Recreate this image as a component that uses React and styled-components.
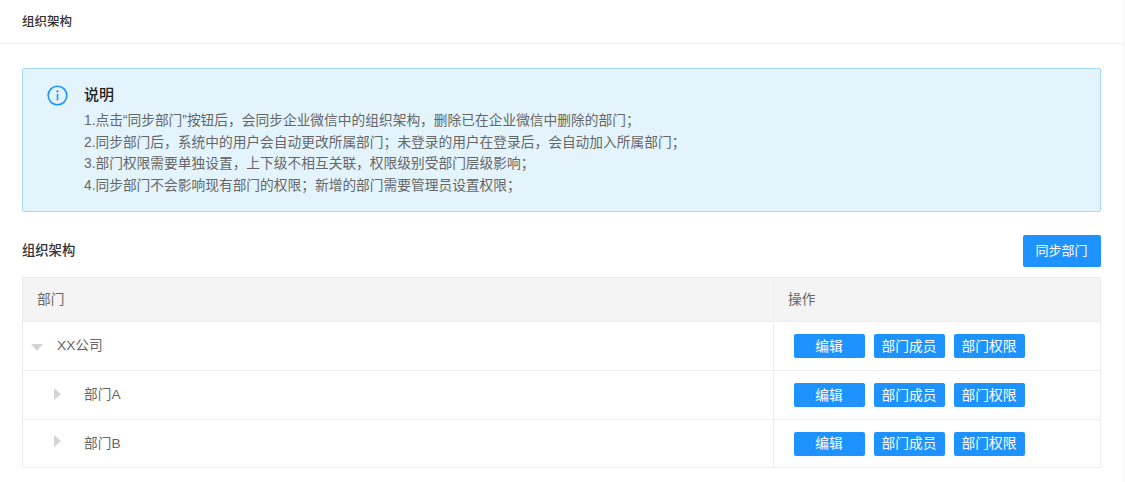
import React from 'react'
import styled, { createGlobalStyle } from 'styled-components'

const GlobalStyle = createGlobalStyle`
  html, body {
    margin: 0;
    padding: 0;
    background: #fff;
    font-family: "Liberation Sans", "Noto Sans CJK SC", sans-serif;
  }
`

const Page = styled.div`
  width: 1123px;
  height: 482px;
  border-right: 1px solid #f5f5f5;
  overflow: hidden;
`

const TopBar = styled.div`
  height: 43px;
  box-sizing: content-box;
  display: flex;
  align-items: center;
  padding: 0 22px;
  border-bottom: 1px solid #f0f0f0;
  font-size: 12.5px;
  font-weight: 500;
  color: #333;

  span {
    margin-bottom: 3px;
  }
`

const Content = styled.div`
  padding: 24px 22px 0;
`

const Notice = styled.div`
  box-sizing: border-box;
  width: 1079px;
  height: 144px;
  display: flex;
  background: #e3f4fd;
  border: 1px solid #a3daff;
  border-radius: 2px;
  padding: 14px 24px 0;
`

const NoticeIcon = styled.svg`
  width: 21px;
  height: 21px;
  margin: 2px 16px 0 0;
  flex-shrink: 0;
`

const NoticeTitle = styled.div`
  font-size: 15px;
  font-weight: 500;
  line-height: 24px;
  margin-bottom: 3px;
  color: #222;
`

const NoticeLine = styled.div`
  font-size: 13.72px;
  line-height: 21.7px;
  color: #666;
`

const SectionHead = styled.div`
  display: flex;
  align-items: center;
  justify-content: space-between;
  margin-top: 23px;
  height: 32px;
`

const SectionTitle = styled.div`
  font-size: 13.3px;
  font-weight: 500;
  margin-bottom: 3px;
  color: #333;
`

const Button = styled.button`
  box-sizing: border-box;
  border: 0;
  padding: 0 1px 3px 0;
  background: #1e92ff;
  color: #fff;
  font: inherit;
  font-size: ${p => (p.$large ? '13px' : '13.7px')};
  border-radius: 2px;
  width: ${p => (p.$large ? '78px' : '71px')};
  height: ${p => (p.$large ? '32px' : '24px')};
`

const Table = styled.div`
  box-sizing: border-box;
  width: 1079px;
  margin-top: 10px;
  border: 1px solid #ededed;
  font-size: 13.7px;
  color: #666;
`

const Row = styled.div`
  display: grid;
  grid-template-columns: 750px 1fr;
  height: ${p => p.$h}px;
  border-bottom: ${p => (p.$last ? '0' : '1px solid #ededed')};
  box-sizing: border-box;
  background: ${p => (p.$head ? '#f4f4f4' : '#fff')};
`

const NameCell = styled.div`
  display: flex;
  align-items: center;
  padding-left: ${p => p.$indent}px;
`

const CellLabel = styled.span`
  margin-bottom: 4px;
`

const ActionCell = styled.div`
  display: flex;
  align-items: center;
  gap: 9px;
  padding-left: ${p => p.$pad}px;
  border-left: 1px solid #ededed;
`

const Caret = styled.span`
  width: 0;
  height: 0;
  margin-right: ${p => p.$gap}px;
  margin-bottom: ${p => p.$lift}px;
  border-style: solid;
  ${p => p.$open
    ? 'border-width: 7px 6px 0 6px; border-color: #d4d4d4 transparent transparent transparent;'
    : 'border-width: 6px 0 6px 7px; border-color: transparent transparent transparent #d4d4d4;'}
`

const rows = [
  { name: 'XX公司', indent: 8, open: true, gap: 14, h: 49, lift: -2 },
  { name: '部门A', indent: 31, open: false, gap: 23, h: 49, lift: 2 },
  { name: '部门B', indent: 31, open: false, gap: 23, h: 47, lift: 6, last: true },
]

function App() {
  return (
    <Page>
      <GlobalStyle />
      <TopBar><span>组织架构</span></TopBar>
      <Content>
        <Notice>
          <NoticeIcon viewBox="0 0 21 21" fill="none">
            <circle cx="10.5" cy="10.5" r="9.3" stroke="#1e92ff" strokeWidth="1.6" />
            <circle cx="10.5" cy="6.4" r="1.1" fill="#1e92ff" />
            <rect x="9.7" y="9" width="1.6" height="6.4" fill="#1e92ff" />
          </NoticeIcon>
          <div>
            <NoticeTitle>说明</NoticeTitle>
            <NoticeLine>1.点击“同步部门”按钮后，会同步企业微信中的组织架构，删除已在企业微信中删除的部门；</NoticeLine>
            <NoticeLine>2.同步部门后，系统中的用户会自动更改所属部门；未登录的用户在登录后，会自动加入所属部门；</NoticeLine>
            <NoticeLine>3.部门权限需要单独设置，上下级不相互关联，权限级别受部门层级影响；</NoticeLine>
            <NoticeLine>4.同步部门不会影响现有部门的权限；新增的部门需要管理员设置权限；</NoticeLine>
          </div>
        </Notice>
        <SectionHead>
          <SectionTitle>组织架构</SectionTitle>
          <Button $large>同步部门</Button>
        </SectionHead>
        <Table>
          <Row $head $h={44}>
            <NameCell $indent={14}><CellLabel>部门</CellLabel></NameCell>
            <ActionCell $pad={14}><CellLabel>操作</CellLabel></ActionCell>
          </Row>
          {rows.map(r => (
            <Row key={r.name} $h={r.h} $last={r.last}>
              <NameCell $indent={r.indent}>
                <Caret $open={r.open} $gap={r.gap} $lift={r.lift} />
                <CellLabel>{r.name}</CellLabel>
              </NameCell>
              <ActionCell $pad={20}>
                <Button>编辑</Button>
                <Button>部门成员</Button>
                <Button>部门权限</Button>
              </ActionCell>
            </Row>
          ))}
        </Table>
      </Content>
    </Page>
  )
}

export default App
